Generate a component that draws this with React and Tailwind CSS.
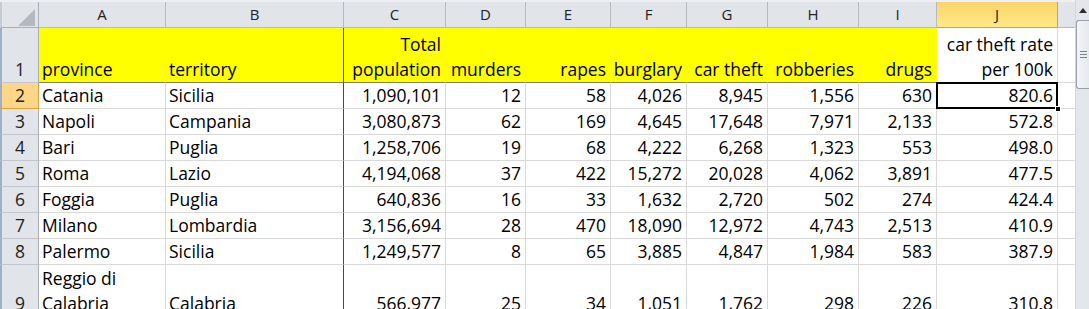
import clsx from "clsx";

const GRID =
  "grid shrink-0 grid-cols-[39px_127px_178px_102px_80px_85px_76px_81px_91px_78px_121px_17px]";

const letters = ["A", "B", "C", "D", "E", "F", "G", "H", "I", "J"];

const rows = [
  ["Catania", "Sicilia", "1,090,101", "12", "58", "4,026", "8,945", "1,556", "630", "820.6"],
  ["Napoli", "Campania", "3,080,873", "62", "169", "4,645", "17,648", "7,971", "2,133", "572.8"],
  ["Bari", "Puglia", "1,258,706", "19", "68", "4,222", "6,268", "1,323", "553", "498.0"],
  ["Roma", "Lazio", "4,194,068", "37", "422", "15,272", "20,028", "4,062", "3,891", "477.5"],
  ["Foggia", "Puglia", "640,836", "16", "33", "1,632", "2,720", "502", "274", "424.4"],
  ["Milano", "Lombardia", "3,156,694", "28", "470", "18,090", "12,972", "4,743", "2,513", "410.9"],
  ["Palermo", "Sicilia", "1,249,577", "8", "65", "3,885", "4,847", "1,984", "583", "387.9"],
];

function RowHead({ n, active }) {
  return (
    <div
      className={clsx(
        "flex items-end justify-center border-l-2 border-r border-b leading-[25px] text-[#222]",
        active
          ? "bg-[#fdd688] border-l-[#9fb0c6] border-r-[#d9a441] border-b-[#d9a441]"
          : "bg-[#e1e4e9] border-l-[#9fb0c6] border-r-[#a9aeb5] border-b-[#c3c7cd]"
      )}
    >
      {n}
    </div>
  );
}

function Cell({ children, left, className }) {
  return (
    <div
      className={clsx(
        "flex items-end overflow-hidden whitespace-nowrap border-r border-b border-[#d9d9d9] leading-[25px] text-black",
        left ? "justify-start pl-[3px]" : "justify-end pr-[4px] text-right",
        className
      )}
    >
      {children}
    </div>
  );
}

export default function App() {
  return (
    <div className="flex w-[1089px] h-[309px] overflow-hidden bg-white font-['Open_Sans',sans-serif] text-[17.5px]">
      <div className="w-[1075px] flex flex-col">
        {/* column letters */}
        <div className={clsx(GRID, "h-[28px] border-t-2 border-t-[#eef0f3]")}>
          <div className="relative bg-[#e1e4e9] border-l-2 border-l-[#c7ccd3] border-r border-b border-[#a9aeb5]">
            <svg className="absolute left-[16px] top-[7px]" width="18" height="17" viewBox="0 0 18 17">
              <polygon points="17,0 17,17 0,17" fill="#b5b9bf" />
            </svg>
          </div>
          {letters.map((l) => (
            <div
              key={l}
              className={clsx(
                "flex items-center justify-center border-r border-b text-[15px] text-[#222]",
                l === "J"
                  ? "bg-gradient-to-b from-[#fbd46b] to-[#ffe886] border-[#d0a243]"
                  : "bg-[#e1e4e9] border-[#b6bac0]"
              )}
            >
              {l}
            </div>
          ))}
          <div className="bg-[#e1e4e9] border-b border-[#b6bac0]" />
        </div>

        {/* row 1: headings */}
        <div className={clsx(GRID, "h-[55px]")}>
          <RowHead n="1" />
          <Cell left className="bg-[#ffff00] border-r-[#ffff00] border-b-[#7b7b7b]">province</Cell>
          <Cell left className="bg-[#ffff00] border-r-[#4a4a4a] border-b-[#7b7b7b]">territory</Cell>
          <Cell className="bg-[#ffff00] border-r-[#ffff00] border-b-[#7b7b7b]">
            <span>
              Total
              <br />
              population
            </span>
          </Cell>
          {["murders", "rapes", "burglary", "car theft", "robberies", "drugs"].map((h) => (
            <Cell key={h} className="bg-[#ffff00] border-r-[#ffff00] border-b-[#7b7b7b]">
              {h}
            </Cell>
          ))}
          <Cell className="border-b-[#7b7b7b]">
            <span>
              car theft rate
              <br />
              per 100k
            </span>
          </Cell>
          <Cell className="border-r-0" />
        </div>

        {/* data rows */}
        {rows.map((r, i) => (
          <div key={i} className={clsx(GRID, "h-[26px]")}>
            <RowHead n={i + 2} active={i === 0} />
            {r.map((v, j) => {
              const selected = i === 0 && j === 9;
              return (
                <Cell
                  key={j}
                  left={j < 2}
                  className={clsx(j === 1 && "border-r-[#4a4a4a]", selected && "relative overflow-visible")}
                >
                  {v}
                  {selected && (
                    <>
                      <span className="absolute -left-[1px] -top-[1px] -right-[1px] -bottom-[1px] border-2 border-black" />
                      <span className="absolute -right-[4px] -bottom-[4px] w-[6px] h-[6px] bg-black border border-white" />
                    </>
                  )}
                </Cell>
              );
            })}
            <Cell className="border-r-0" />
          </div>
        ))}

        {/* row 9, wrapped */}
        <div className={clsx(GRID, "h-[52px]")}>
          <RowHead n="9" />
          <Cell left className="whitespace-normal">
            <span>
              Reggio di
              <br />
              Calabria
            </span>
          </Cell>
          <Cell left className="border-r-[#4a4a4a]">Calabria</Cell>
          {["566,977", "25", "34", "1,051", "1,762", "298", "226", "310.8"].map((v, j) => (
            <Cell key={j}>{v}</Cell>
          ))}
          <Cell className="border-r-0" />
        </div>
      </div>

      {/* vertical scrollbar */}
      <div className="w-[14px] flex flex-col bg-[#e3e6eb] border-l border-[#d3d7dd]">
        <div className="h-[20px] flex items-center justify-center">
          <svg width="8" height="5" viewBox="0 0 8 5">
            <polygon points="4,0 8,5 0,5" fill="#2d2d2d" />
          </svg>
        </div>
        <div className="h-[69px] rounded-l-[3px] border border-r-0 border-[#99a0ab] bg-gradient-to-r from-[#f3f4f6] to-[#e6e9ee] flex flex-col items-center justify-center gap-[2px]">
          <div className="w-[7px] h-[1px] bg-[#7a828e]" />
          <div className="w-[7px] h-[1px] bg-[#7a828e]" />
          <div className="w-[7px] h-[1px] bg-[#7a828e]" />
        </div>
      </div>
    </div>
  );
}
